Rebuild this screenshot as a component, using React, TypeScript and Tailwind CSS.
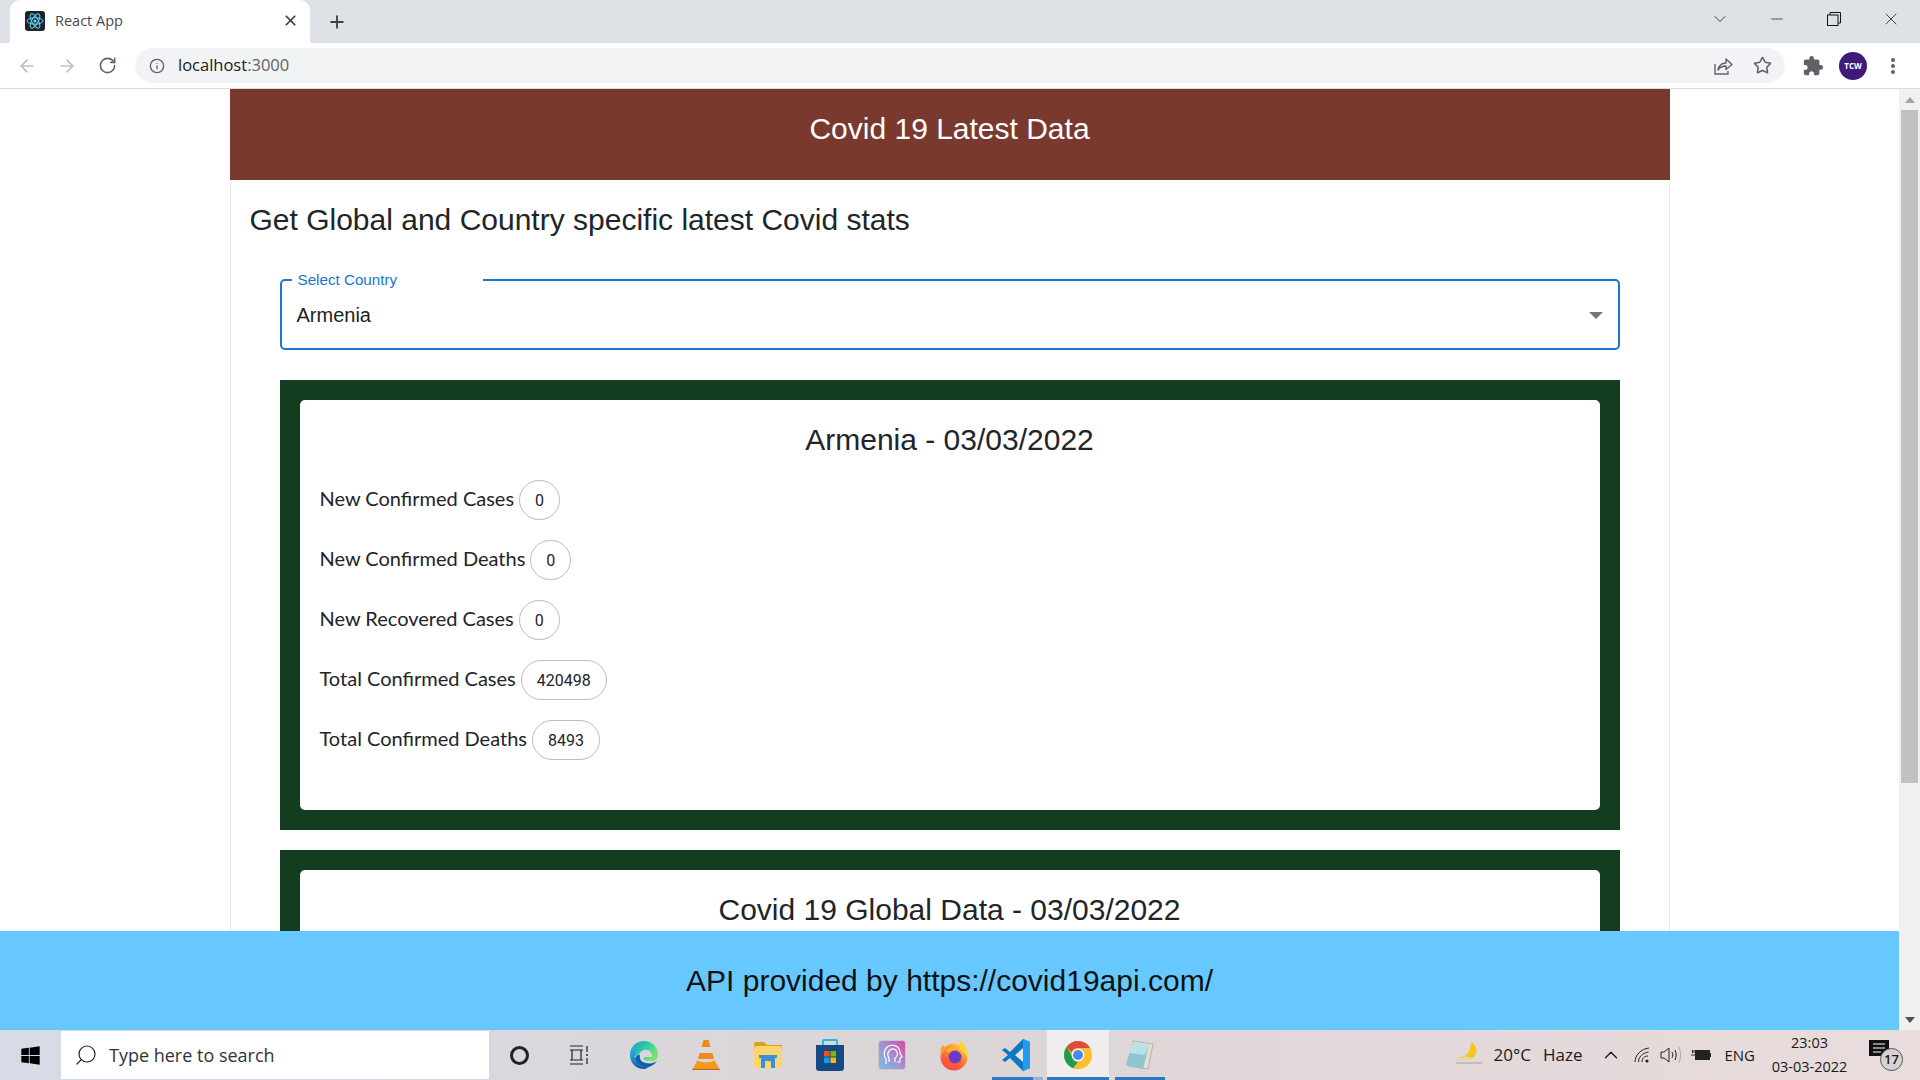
import { ArrowLeft, ArrowRight, ChevronDown, ChevronUp, Info, Minus, Plus, RotateCw, Search, Star, X } from 'lucide-react'
import { FaWindows } from 'react-icons/fa'
import { MdExtension } from 'react-icons/md'

const stats = [
  { label: 'New Confirmed Cases', value: '0' },
  { label: 'New Confirmed Deaths', value: '0' },
  { label: 'New Recovered Cases', value: '0' },
  { label: 'Total Confirmed Cases', value: '420498' },
  { label: 'Total Confirmed Deaths', value: '8493' },
]

const ReactFavicon = () => (
  <svg width="20" height="20" viewBox="0 0 20 20">
    <rect width="20" height="20" rx="3" fill="#20232a" />
    <g fill="none" stroke="#61dafb" strokeWidth="1">
      <ellipse cx="10" cy="10" rx="8" ry="3.2" />
      <ellipse cx="10" cy="10" rx="8" ry="3.2" transform="rotate(60 10 10)" />
      <ellipse cx="10" cy="10" rx="8" ry="3.2" transform="rotate(120 10 10)" />
    </g>
    <circle cx="10" cy="10" r="1.6" fill="#61dafb" />
  </svg>
)

const ShareIcon = () => (
  <svg width="20" height="20" viewBox="0 0 20 20" fill="none" stroke="#5f6368" strokeWidth="1.4">
    <path d="M2 8v10h13v-3" />
    <path d="M5 14c1-5 4-7 8-7V3l6 5.5-6 5V10c-3 0-6 1-8 4z" strokeLinejoin="round" />
  </svg>
)

const Edge = () => (
  <svg width="30" height="30" viewBox="0 0 30 30">
    <defs>
      <linearGradient id="edgeTop" x1="0" y1="0" x2="1" y2="0.6">
        <stop offset="0" stopColor="#1b9bd0" />
        <stop offset="0.6" stopColor="#38cfa0" />
        <stop offset="1" stopColor="#7fe36a" />
      </linearGradient>
      <linearGradient id="edgeLow" x1="0" y1="0" x2="0.5" y2="1">
        <stop offset="0" stopColor="#2fb4e8" />
        <stop offset="1" stopColor="#0d5aa8" />
      </linearGradient>
    </defs>
    <path d="M1 15a14 14 0 0128 0c0 4-3 6-6 6h-4c-3 0-5-2-4-4h8c1-4-3-8-8-7-3 1-5 3-5 6H1z" fill="url(#edgeTop)" />
    <path d="M1 15c0-4 5-7 9-6-3 2-5 5-4 9 1 6 7 10 14 9-2 1-3 2-5 2C7 29 1 23 1 15z" fill="url(#edgeLow)" />
    <path d="M6 18c1 6 7 10 14 9 3-1 6-3 8-6-3 2-7 3-11 2-5-1-7-4-6-8-2 0-4 1-5 3z" fill="#0d5fae" />
  </svg>
)

const Vlc = () => (
  <svg width="28" height="32" viewBox="0 0 28 32">
    <path d="M11.500 1h5l2 7H9.500z" fill="#f08a1c" />
    <path d="M9.500 8h9l1.800 6H7.700z" fill="#dcdcdc" />
    <path d="M7.700 14h12.600l1.700 6H6z" fill="#f08a1c" />
    <path d="M6 20h16l1 3H5z" fill="#d8d8d8" />
    <path d="M5.500 21L1 29.500h26L22.500 21c-2 3-15 3-17 0z" fill="#f59a1a" />
    <path d="M.5 29.500h27l.5 1.500H0z" fill="#c96a0c" />
  </svg>
)

const Folder = () => (
  <svg width="30" height="28" viewBox="0 0 30 28">
    <path d="M1 3a2 2 0 012-2h8l3 3h14a1 1 0 011 1v3H1z" fill="#d9a21e" />
    <rect x="1" y="5" width="28" height="22" rx="2" fill="#fdd66b" />
    <path d="M6 14h18v3h-2v10h-4v-7h-6v7H8V17H6z" fill="#3a8fd6" />
  </svg>
)

const Store = () => (
  <svg width="30" height="34" viewBox="0 0 30 34">
    <path d="M8 8V3a1 1 0 011-1h12a1 1 0 011 1v5" fill="none" stroke="#29b6e8" strokeWidth="2" />
    <path d="M1 7h28v23a3 3 0 01-3 3H4a3 3 0 01-3-3z" fill="#174a82" />
    <rect x="9" y="13" width="5.500" height="5.500" fill="#f25022" />
    <rect x="15.500" y="13" width="5.500" height="5.500" fill="#7fba00" />
    <rect x="9" y="19.500" width="5.500" height="5.500" fill="#00a4ef" />
    <rect x="15.500" y="19.500" width="5.500" height="5.500" fill="#ffb900" />
  </svg>
)

const MsiApp = () => (
  <svg width="28" height="30" viewBox="0 0 28 30">
    <defs>
      <linearGradient id="msi" x1="0" y1="1" x2="1" y2="0">
        <stop offset="0" stopColor="#6fc4e2" />
        <stop offset="0.5" stopColor="#a68fd0" />
        <stop offset="1" stopColor="#d947a8" />
      </linearGradient>
    </defs>
    <rect x="0.500" y="0.500" width="27" height="29" rx="3" fill="url(#msi)" stroke="#cbc6d0" />
    <path d="M8 24v-5c-3-4-2-9 1-12 4-3 10-2 12 2 1 2 1 3 1 4l2 4-2 1v4h-3" fill="none" stroke="#fff" strokeWidth="1.2" />
    <path d="M11 22v-4c-2-3-1-6 1-8 3-2 6-1 7 2 1 2 0 5-2 6v4" fill="none" stroke="#fff" strokeWidth="1.2" />
  </svg>
)

const Firefox = () => (
  <svg width="30" height="32" viewBox="0 0 30 32">
    <defs>
      <linearGradient id="ffx" x1="0.8" y1="0" x2="0.2" y2="1">
        <stop offset="0" stopColor="#ffd43a" />
        <stop offset="0.5" stopColor="#ff7a2b" />
        <stop offset="1" stopColor="#f5365c" />
      </linearGradient>
    </defs>
    <circle cx="15" cy="18" r="13.500" fill="url(#ffx)" />
    <path d="M20 1c7 4 10 12 8.500 19-2-6-5-9-9-10 2-3 2-6 .5-9z" fill="#ffd43a" />
    <path d="M2 16c-1-4 0-8 2-10 1 2 2 3 4 3-2 2-4 4-6 7z" fill="#ff9a2e" />
    <path d="M7 11c4-3 10-2 13 1-5-1-9 0-11 2z" fill="#ffb02e" />
    <circle cx="16" cy="18" r="6.500" fill="#6a3bc9" />
    <path d="M8 18c1 5 6 8 11 6 2-1 3-2 4-3-1 5-5 8-10 8-4 0-7-3-8-6 0-2 1-4 3-5z" fill="#ff5a36" />
  </svg>
)

const VsCode = () => (
  <svg width="30" height="34" viewBox="0 0 30 34">
    <path d="M22 1l7 3v26l-7 3L9 20l-5 4-3-2 6-5-6-5 3-2 5 4z" fill="#0a78c2" />
    <path d="M22 1l7 3v26l-7 3z" fill="#1f9cf0" />
    <path d="M22 10l-8 7 8 7z" fill="#e9e4e4" />
  </svg>
)

const Chrome = () => (
  <svg width="28" height="28" viewBox="0 0 28 28">
    <circle cx="14" cy="14" r="14" fill="#fbc02d" />
    <path d="M14 0a14 14 0 0112.100 7H14a7 7 0 00-6.500 4.500L2.700 5.800A14 14 0 0114 0z" fill="#dd4b3e" />
    <path d="M2.700 5.800l5 8.700A7 7 0 0014 21l-4.700 6.200A14 14 0 012.700 5.800z" fill="#1e9d52" />
    <path d="M9.300 27.200L14 21a7 7 0 006-10.500l6.100-3.500A14 14 0 019.300 27.200z" fill="#fbc02d" />
    <circle cx="14" cy="14" r="6.300" fill="#fff" />
    <circle cx="14" cy="14" r="5" fill="#4a89f3" />
  </svg>
)

const Notepad = () => (
  <svg width="30" height="32" viewBox="0 0 30 32">
    <path d="M8 2l20 3-5 25-20-3z" fill="#e5dfd0" stroke="#8f8a80" strokeWidth="0.5" />
    <path d="M7 4l17 2-6 24L1 26z" fill="#8fc6cf" />
    <path d="M7 4l17 2-4 10L4 14z" fill="#b8e2e6" />
  </svg>
)

const Moon = () => (
  <svg width="30" height="28" viewBox="0 0 30 28">
    <path d="M16 1c6 3 7 11 3 15-4 3-10 3-15 0 6 0 11-2 12-15z" fill="#f6c81e" />
    <path d="M8 17c1-2 4-2 5 0 2-1 5 0 5 2h6v1H1c1-2 4-3 7-3z" fill="#e6d7b6" />
    <path d="M1 22h26" stroke="#a9a096" strokeWidth="1" />
  </svg>
)

const Wifi = () => (
  <svg width="16" height="16" viewBox="0 0 16 16" fill="none" stroke="#222" strokeWidth="1">
    <path d="M1 15C1 8 7 2 15 1M4.500 15c0-5 4-9 10-10M8 15c0-3 2-6 6-6" />
    <circle cx="13" cy="14" r="1.600" fill="#222" stroke="none" />
  </svg>
)

const Speaker = () => (
  <svg width="21" height="18" viewBox="0 0 21 18" fill="none" stroke="#222" strokeWidth="1">
    <path d="M1 6h3l5-4v14l-5-4H1z" />
    <path d="M12 6c1 2 1 4 0 6M15 4c1.500 3 1.500 7 0 10" />
    <path d="M19 1c2 5 2 11 0 16" stroke="#aaa" />
  </svg>
)

const Battery = () => (
  <svg width="20" height="12" viewBox="0 0 20 12">
    <rect x="4.500" y="1.500" width="14" height="9" fill="#222" stroke="#222" />
    <rect x="18.500" y="4" width="1.500" height="4" fill="#222" />
    <path d="M0 6h4M1.500 1v3M3 1v3" stroke="#222" fill="none" />
  </svg>
)

const TaskView = () => (
  <svg width="20" height="20" viewBox="0 0 20 20" fill="none" stroke="#222" strokeWidth="1.2">
    <path d="M1 1h13M1 19h13M3 5h9v10H3zM1 5h13M1 15h13M18 1v6M18 13v6" />
    <circle cx="18" cy="10" r="1" fill="#222" stroke="none" />
  </svg>
)

const StatRow = ({ label, value }: { label: string, value: string }) => (
  <div className="flex items-center h-[40px] mb-[20px] text-[#212529]">
    <span className="text-[20px] pb-[4px] font-['Lato',sans-serif]">{label}</span>
    <span className="ml-[5px] h-[40px] min-w-[41px] px-[15px] pt-[1px] rounded-[20px] border border-[#bdbdbd] flex items-center justify-center text-[16px] font-['Roboto',sans-serif]">
      {value}
    </span>
  </div>
)

const App = () => {
  const tiles = [
    { icon: <Edge /> },
    { icon: <Vlc /> },
    { icon: <Folder /> },
    { icon: <Store /> },
    { icon: <MsiApp /> },
    { icon: <Firefox /> },
    { icon: <VsCode />, bar: 'vscode' },
    { icon: <Chrome />, bar: 'active' },
    { icon: <Notepad />, bar: 'open' },
  ]

  return (
    <div className="h-screen w-full overflow-hidden flex flex-col bg-white font-['Liberation_Sans',sans-serif]">
      {/* Tab strip */}
      <div className="h-[43px] shrink-0 bg-[#dee1e6] flex items-end pl-[10px] font-['Open_Sans',sans-serif]">
        <div className="w-[300px] h-[43px] bg-white rounded-t-[10px] flex items-center pl-[15px] pr-[11px] pb-[2px] gap-[10px]">
          <ReactFavicon />
          <span className="flex-1 text-[14.500px] text-[#45494e]">React App</span>
          <X size={17} strokeWidth={2.4} className="text-[#3c4043]" />
        </div>
        <div className="h-[43px] w-[54px] flex items-center justify-center">
          <Plus size={20} strokeWidth={2.2} className="text-[#3c4043]" />
        </div>
        <div className="flex-1" />
        <div className="h-[43px] pb-[6px] flex items-center text-[#222]">
          <div className="w-[57px] flex justify-center"><ChevronDown size={20} strokeWidth={1} /></div>
          <div className="w-[57px] flex justify-center"><Minus size={18} strokeWidth={1} /></div>
          <div className="w-[57px] flex justify-center">
            <svg width="14" height="14" viewBox="0 0 14 14" fill="none" stroke="#111" strokeWidth="1">
              <rect x="0.500" y="3" width="10.500" height="10.500" />
              <path d="M3 3V.5h10.500V11H11" />
            </svg>
          </div>
          <div className="w-[58px] flex justify-center"><X size={20} strokeWidth={1} /></div>
        </div>
      </div>

      {/* Toolbar */}
      <div className="h-[46px] shrink-0 bg-white border-b border-[#dadce0] flex items-center font-['Open_Sans',sans-serif]">
        <div className="w-[135px] shrink-0 flex items-center pl-[17px] gap-[20px]">
          <ArrowLeft size={20} className="text-[#bcbec0]" />
          <ArrowRight size={20} className="text-[#bcbec0]" />
          <RotateCw size={19} className="text-[#5f6368] ml-[1px]" />
        </div>
        <div className="w-[1650px] h-[35px] rounded-full bg-[#f1f3f4] flex items-center pl-[14px] pr-[13px]">
          <Info size={16} className="text-[#5f6368]" />
          <span className="flex-1 ml-[13px] text-[16.500px] text-[#202124]">
            localhost<span className="text-[#5f6368]">:3000</span>
          </span>
          <div className="flex items-center gap-[20px]">
            <ShareIcon />
            <Star size={19} className="text-[#5f6368]" />
          </div>
        </div>
        <div className="flex-1 flex items-center pl-[17px]">
          <MdExtension size={22} className="text-[#5f6368]" />
          <div className="ml-[15px] w-[28px] h-[28px] rounded-full bg-[#3f1a78] flex items-center justify-center text-white text-[8px] font-bold">TCW</div>
          <svg width="12" height="20" viewBox="0 0 12 20" className="ml-[20px]">
            <circle cx="6" cy="4" r="2" fill="#5f6368" />
            <circle cx="6" cy="10" r="2" fill="#5f6368" />
            <circle cx="6" cy="16" r="2" fill="#5f6368" />
          </svg>
        </div>
      </div>

      {/* Viewport */}
      <div className="flex-1 min-h-0 flex relative">
        <div className="flex-1 min-w-0 overflow-hidden relative">
          <div className="w-[1440px] mx-auto">
            <div className="h-[91px] bg-[#7a392f] text-white text-[30px] text-center pt-[22px] leading-[36px]">
              Covid 19 Latest Data
            </div>
            <div className="border-x border-[#e8e8e8] rounded-t-[5px] px-[19px] pt-[21px] pb-[20px]">
              <h2 className="text-[30px] leading-[38px] text-[#212529]">Get Global and Country specific latest Covid stats</h2>
              <div className="px-[30px] mt-[32px]">
                <fieldset className="h-[79px] border-2 border-[#1976d2] rounded-[5px] px-[10px]">
                  <legend className="w-[191px] h-[18px] pl-[6px] text-[15.200px] leading-[18px] text-[#1976d2]">Select Country</legend>
                  <div className="flex items-center justify-between pl-[5px] pr-[4px] h-[52px]">
                    <span className="text-[20px] text-[#212121]">Armenia</span>
                    <svg width="14" height="8" viewBox="0 0 14 8" className="mr-[1px] mt-[1px]">
                      <path d="M0 0h14L7 7z" fill="#757575" />
                    </svg>
                  </div>
                </fieldset>

                <div className="mt-[30px] bg-[#143d20] p-[20px]">
                  <div className="bg-white rounded-[5px] h-[410px] px-[20px] pt-[21px]">
                    <h3 className="text-[30px] leading-[38px] text-center text-[#212529]">Armenia - 03/03/2022</h3>
                    <div className="mt-[21px]">
                      {stats.map(stat => (
                        <StatRow key={stat.label} label={stat.label} value={stat.value} />
                      ))}
                    </div>
                  </div>
                </div>

                <div className="mt-[20px] bg-[#143d20] p-[20px]">
                  <div className="bg-white rounded-[5px] h-[410px] px-[20px] pt-[21px]">
                    <h3 className="text-[30px] leading-[38px] text-center text-[#212529]">Covid 19 Global Data - 03/03/2022</h3>
                  </div>
                </div>
              </div>
            </div>
          </div>

          {/* Fixed footer */}
          <div className="absolute left-0 right-0 bottom-0 h-[99px] bg-[#66c8ff] text-[30px] text-[#111] flex justify-center pt-[30px] leading-[40px]">
            API provided by https://covid19api.com/
          </div>
        </div>

        {/* Scrollbar */}
        <div className="w-[21px] shrink-0 bg-[#f1f1f1] flex flex-col items-center">
          <div className="h-[21px] flex items-center justify-center">
            <svg width="10" height="6" viewBox="0 0 10 6"><path d="M0 6h10L5 0z" fill="#a3a3a3" /></svg>
          </div>
          <div className="w-[17px] h-[673px] bg-[#c1c1c1]" />
          <div className="flex-1" />
          <div className="h-[21px] flex items-center justify-center">
            <svg width="10" height="6" viewBox="0 0 10 6"><path d="M0 0h10L5 6z" fill="#505050" /></svg>
          </div>
        </div>
      </div>

      {/* Taskbar */}
      <div className="h-[50px] shrink-0 flex items-stretch bg-gradient-to-r from-[#d6dbe6] via-[#dcd5d6] to-[#e9dcdc] font-['Open_Sans',sans-serif] text-[#1a1a1a]">
        <div className="w-[61px] flex items-center justify-center">
          <FaWindows size={21} className="text-black" />
        </div>
        <div className="w-[428px] my-[1px] bg-white flex items-center pl-[13px] gap-[11px]">
          <Search size={24} strokeWidth={1.2} className="text-[#222] -scale-x-100" />
          <span className="text-[18px] text-[#333]">Type here to search</span>
        </div>
        <div className="w-[60px] flex items-center justify-center">
          <div className="w-[19px] h-[19px] rounded-full border-[3px] border-[#222]" />
        </div>
        <div className="w-[60px] flex items-center justify-center"><TaskView /></div>
        <div className="w-[4px]" />
        {tiles.map((tile, i) => (
          <div
            key={i}
            className={`w-[62px] relative flex items-center justify-center ${tile.bar === 'active' ? 'bg-[#f1eded]' : ''}`}
          >
            {tile.icon}
            {tile.bar === 'active' && <div className="absolute left-0 right-0 bottom-0 h-[3px] bg-[#2b78c9]" />}
            {tile.bar === 'open' && <div className="absolute left-[6px] right-[6px] bottom-0 h-[3px] bg-[#2b78c9]" />}
            {tile.bar === 'vscode' && (
              <div className="absolute left-[7px] right-[4px] bottom-0 h-[3px] bg-[#8fb4de]">
                <div className="w-[41px] h-[3px] bg-[#2b78c9]" />
              </div>
            )}
          </div>
        ))}
        <div className="flex-1" />
        <div className="flex items-center text-[17px]">
          <Moon />
          <span className="ml-[9px]">20°C</span>
          <span className="ml-[12px]">Haze</span>
          <ChevronUp size={22} strokeWidth={1.4} className="ml-[18px]" />
          <span className="ml-[12px]"><Wifi /></span>
          <span className="ml-[10px]"><Speaker /></span>
          <span className="ml-[10px]"><Battery /></span>
          <span className="ml-[13px] text-[15px]">ENG</span>
          <div className="ml-[2px] w-[105px] text-center text-[14.500px] leading-[24px]">
            <div>23:03</div>
            <div>03-03-2022</div>
          </div>
          <div className="relative w-[40px] ml-[1px] h-[30px] mr-[17px]">
            <svg width="22" height="20" viewBox="0 0 22 20" className="absolute left-[6px] top-0">
              <path d="M0 0h20v16H0z" fill="#111" />
              <path d="M4 4h12M4 8h12M4 12h8" stroke="#fff" strokeWidth="1" />
            </svg>
            <div className="absolute left-[17px] top-[8px] w-[23px] h-[23px] rounded-full border border-[#555] bg-[#d8d2d2] text-[13px] font-semibold flex items-center justify-center">17</div>
          </div>
        </div>
      </div>
    </div>
  )
}

export default App
